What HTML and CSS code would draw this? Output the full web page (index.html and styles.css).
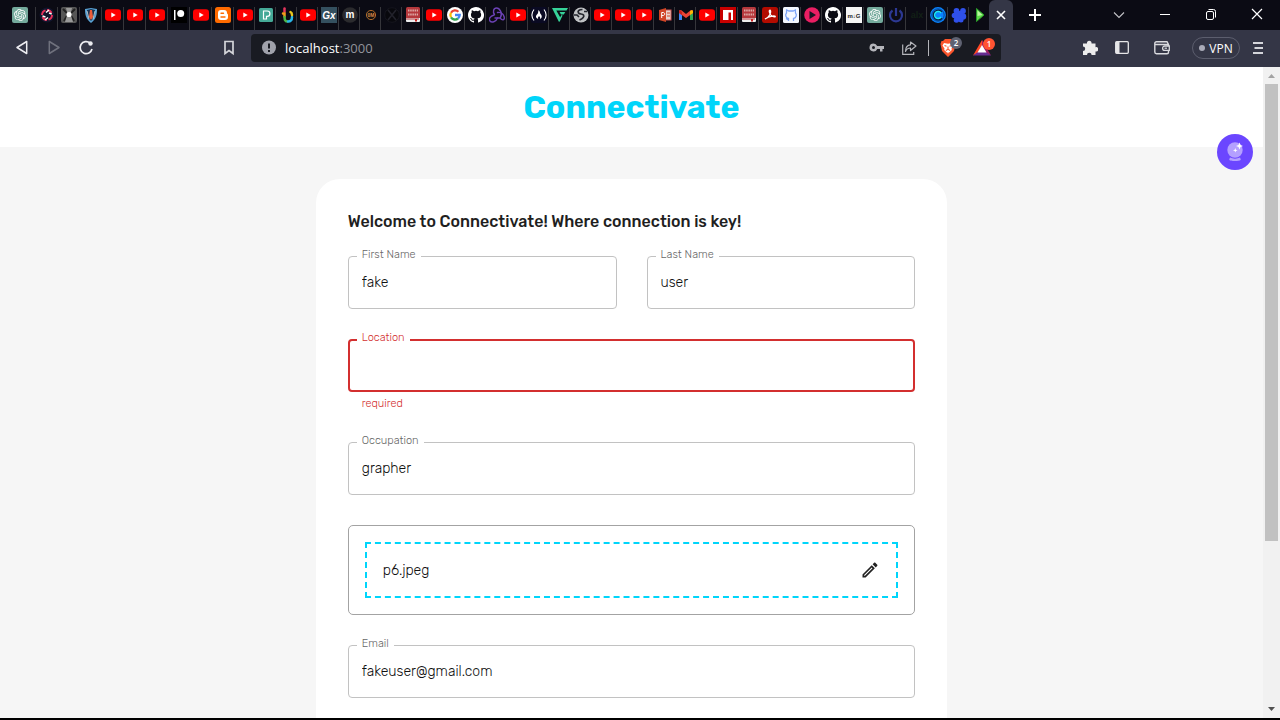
FILE: index.html
```html
<!DOCTYPE html>
<html lang="en">
<head>
<meta charset="utf-8">
<title>Connectivate</title>
<link rel="stylesheet" href="styles.css">
</head>
<body>
<svg class="sprite" aria-hidden="true">
  <symbol id="gpt" viewBox="0 0 32 32"><rect width="32" height="32" rx="4" fill="#74aa9c"/><path transform="translate(4 4)" fill="#fff" d="M22.2819 9.8211a5.9847 5.9847 0 0 0-.5157-4.9108 6.0462 6.0462 0 0 0-6.5098-2.9A6.0651 6.0651 0 0 0 4.9807 4.1818a5.9847 5.9847 0 0 0-3.9977 2.9 6.0462 6.0462 0 0 0 .7427 7.0966 5.98 5.98 0 0 0 .511 4.9107 6.051 6.051 0 0 0 6.5146 2.9001A5.9847 5.9847 0 0 0 13.2599 24a6.0557 6.0557 0 0 0 5.7718-4.2058 5.9894 5.9894 0 0 0 3.9977-2.9001 6.0557 6.0557 0 0 0-.7475-7.0729zm-9.022 12.6081a4.4755 4.4755 0 0 1-2.8764-1.0408l.1419-.0804 4.7783-2.7582a.7948.7948 0 0 0 .3927-.6813v-6.7369l2.02 1.1686a.071.071 0 0 1 .038.052v5.5826a4.504 4.504 0 0 1-4.4945 4.4944zm-9.6607-4.1254a4.4708 4.4708 0 0 1-.5346-3.0137l.142.0852 4.783 2.7582a.7712.7712 0 0 0 .7806 0l5.8428-3.3685v2.3324a.0804.0804 0 0 1-.0332.0615L9.74 19.9502a4.4992 4.4992 0 0 1-6.1408-1.6464zM2.3408 7.8956a4.485 4.485 0 0 1 2.3655-1.9728V11.6a.7664.7664 0 0 0 .3879.6765l5.8144 3.3543-2.0201 1.1685a.0757.0757 0 0 1-.071 0l-4.8303-2.7865A4.504 4.504 0 0 1 2.3408 7.872zm16.5963 3.8558L13.1038 8.364 15.1192 7.2a.0757.0757 0 0 1 .071 0l4.8303 2.7913a4.4944 4.4944 0 0 1-.6765 8.1042v-5.6772a.79.79 0 0 0-.407-.667zm2.0107-3.0231l-.142-.0852-4.7735-2.7818a.7759.7759 0 0 0-.7854 0L9.409 9.2297V6.8974a.0662.0662 0 0 1 .0284-.0615l4.8303-2.7866a4.4992 4.4992 0 0 1 6.6802 4.66zM8.3065 12.863l-2.02-1.1638a.0804.0804 0 0 1-.038-.0567V6.0742a4.4992 4.4992 0 0 1 7.3757-3.4537l-.142.0805L8.704 5.459a.7948.7948 0 0 0-.3927.6813zm1.0976-2.3654l2.602-1.4998 2.6069 1.4998v2.9994l-2.5974 1.4997-2.6067-1.4997Z"/></symbol>
  <symbol id="ring" viewBox="0 0 16 16"><circle cx="8" cy="8" r="7.500" fill="#11152c"/><g fill="none" stroke-width="1.900"><path d="M3 8a5 5 0 0 1 3.500-4.700M8 13a5 5 0 0 1-4.500-3" stroke="#e8305a"/><path d="M8 3a5 5 0 0 1 4.500 3M13 8a5 5 0 0 1-3.500 4.700" stroke="#e8305a"/><path d="M7 5.500l3-2.500M6 13l3-2.500M3.500 9l3 1M10 6l2.700 1" stroke="#fff" stroke-width="1.400"/></g></symbol>
  <symbol id="beam" viewBox="0 0 16 16"><rect width="16" height="16" rx="2" fill="#565656"/><path d="M2 2l5 5-4 7M14 2L9 7l4 7" stroke="#222" stroke-width="2" fill="none"/><path d="M5 1h6L9.500 7 12 15H4l2.500-8z" fill="#999"/><circle cx="8" cy="7.500" r="2.600" fill="#fff"/></symbol>
  <symbol id="shield" viewBox="0 0 16 16"><path d="M2 2l6-1 6 1c0 6-1 10-6 14C3 12 2 8 2 2z" fill="#5aa2d4"/><path d="M4 3l4-1 4 1c0 5-1 8-4 11C5 11 4 8 4 3z" fill="#173453"/><path d="M7 3h2l1 7-2 3-2-3z" fill="#ee5b38"/><path d="M4 4l2 8M12 4l-2 8" stroke="#ddd" stroke-width=".8"/></symbol>
  <symbol id="yt" viewBox="0 0 16 16"><rect y="2.300" width="16" height="11.400" rx="3" fill="#f00"/><path d="M6.300 5.500v5L10.700 8z" fill="#fff"/></symbol>
  <symbol id="patreon" viewBox="0 0 16 16"><rect width="16" height="16" fill="#000"/><path d="M3 3h1.500v10H3z" fill="#fff"/><circle cx="9.700" cy="6.600" r="3.500" fill="#fff"/></symbol>
  <symbol id="blogger" viewBox="0 0 16 16"><rect width="16" height="16" rx="2.500" fill="#ff6a00"/><path d="M6 3h3c2 0 3 1 3 3 0 1 1 .8 1 2v2c0 2-1 3-3 3H6c-2 0-3-1-3-3V6c0-2 1-3 3-3z" fill="#fff"/><path d="M6 6.200h2.500M6 10h4" stroke="#ff6a00" stroke-width="1.400" stroke-linecap="round"/></symbol>
  <symbol id="pexels" viewBox="0 0 16 16"><rect x="1" y="1" width="14" height="14" rx="1.500" fill="#45a997"/><path d="M5.500 12V4h3.700a2.700 2.700 0 0 1 0 5.400H8.500V12z" fill="none" stroke="#fff" stroke-width="1.200"/></symbol>
  <symbol id="rainbow" viewBox="0 0 16 16"><g fill="none" stroke-width="2.500" stroke-linecap="round"><path d="M5.500 1.500v3" stroke="#e6355d"/><path d="M4 6.500h1.500v3" stroke="#f49a1a"/><path d="M5.500 10c0 3 1 4.500 3 4.500" stroke="#4db748"/><path d="M9 14.500c3 0 4-2 4-4.500" stroke="#29b6e8"/><path d="M13 8c0-1.500-.5-2.500-1.500-3" stroke="#e9c51d"/></g></symbol>
  <symbol id="xdark" viewBox="0 0 16 16"><circle cx="8" cy="8" r="7.300" fill="#08080d" stroke="#16161e"/><path d="M4 3l8 10M12 3L4 13" stroke="#22222b" stroke-width="1.600"/></symbol>
  <symbol id="bible" viewBox="0 0 16 16"><rect x="1" width="14" height="13" rx="1.500" fill="#b5383c"/><path d="M1 11h14v3a1 1 0 0 1-1 1H2a1 1 0 0 1-1-1z" fill="#eee"/><path d="M1 12h13" stroke="#b5383c" stroke-width="1"/><path d="M10 12h2v3l-1-1-1 1z" fill="#c22"/><path d="M3 3.500h10M3 7.500h10" stroke="#dda9a5" stroke-width="2" stroke-dasharray="1.500 .7"/></symbol>
  <symbol id="google" viewBox="0 0 16 16"><circle cx="8" cy="8" r="8" fill="#fff"/><g fill="none" stroke-width="2.300"><path d="M4 5.700A4.700 4.700 0 0 1 11.400 4.700" stroke="#ea4335"/><path d="M4 10.300a4.700 4.700 0 0 1 0-4.600" stroke="#fbbc05"/><path d="M4 10.300a4.700 4.700 0 0 0 7 1.200" stroke="#34a853"/><path d="M11 11.500A4.700 4.700 0 0 0 12.700 8H8" stroke="#4285f4"/></g></symbol>
  <symbol id="cat" viewBox="0 0 16 16"><path fill="currentColor" d="M8 0C3.580 0 0 3.580 0 8c0 3.540 2.290 6.530 5.470 7.590.4.070.55-.17.55-.38v-1.490c-2.010.37-2.530-.49-2.690-.94-.09-.23-.48-.94-.82-1.130-.28-.15-.68-.52-.01-.53.63-.01 1.080.58 1.230.82.72 1.210 1.870.87 2.330.66.07-.52.28-.87.510-1.070-1.780-.2-3.640-.89-3.640-3.950 0-.87.310-1.590.82-2.150-.08-.2-.36-1.020.08-2.120 0 0 .67-.21 2.200.82a7.600 7.600 0 0 1 4 0c1.530-1.040 2.200-.82 2.200-.82.44 1.100.16 1.920.08 2.120.51.56.82 1.270.82 2.150 0 3.070-1.870 3.750-3.650 3.950.29.25.54.73.54 1.480v2.200c0 .21.15.46.55.38A8 8 0 0 0 8 0z"/></symbol>
  <symbol id="catbox" viewBox="0 0 16 16"><rect width="16" height="16" rx="1.500" fill="#f4f7ff"/><path d="M5.500 14v-2.500c-3-.4-3.500-4-2-5.500L3.600 3l2.300 1h4.200l2.300-1 .1 3c1.500 1.500 1 5.100-2 5.500V14M3 11.500l2.500 1.500" fill="none" stroke="#7ba3f7" stroke-width="1.300"/></symbol>
  <symbol id="redux" viewBox="0 0 16 16"><g fill="none" stroke="#6c42b5" stroke-width="1.400" stroke-linecap="round"><path d="M11.500 10.500C14 6 10.500 1 7.500 1S3.500 5 5.500 7.500"/><path d="M5 8c-4 1-5.500 4-4 6s6 1 7.500-3"/><path d="M6 11h5c3 3.500 5 1.500 4-1.500S11 5 8.500 5.500"/></g></symbol>
  <symbol id="fcc" viewBox="0 0 16 16"><rect width="16" height="16" rx="2" fill="#0a0a23"/><path d="M3 2.500C.3 6 .3 10 3 13.500M13 2.500c2.700 3.500 2.700 7.500 0 11" fill="none" stroke="#fff" stroke-width="1.100"/><path d="M7.500 3c2 1.500 1 3 2.500 4.500 1.500 2 .5 4-1 4.500.5-2-.5-2.500-1-3-.5 1-1.500 1.500-.8 3C4.500 11 4.500 9 6 7.500 7.500 6 7 5 7.500 3z" fill="#fff"/></symbol>
  <symbol id="vee" viewBox="0 0 16 16"><path d="M0 1h16l-1.500 2.500H4.300l4 7L7 15zM7.500 5h5.800l-1.500 2.500H9zM10.600 8.500L7.500 15l-1-2 3-5z" fill="#36d399"/></symbol>
  <symbol id="globe" viewBox="0 0 16 16"><circle cx="8" cy="8" r="7.500" fill="#bfc1c4"/><path d="M9.500 2.500c-4 0-5 2-4 3.500s4 .5 5 2-.5 3.500-4 5M1 8h3l2 2M11 4.500h3" stroke="#22242c" stroke-width="1.700" fill="none"/></symbol>
  <symbol id="ppt" viewBox="0 0 16 16"><rect x="7" y="3" width="7" height="10" fill="#e8d4cc" stroke="#c55"/><path d="M2 3l7-2v14l-7-2z" fill="#d04526"/><path d="M4.700 11V5.500h1.500c2 0 2 3 0 3H4.700" fill="none" stroke="#fff" stroke-width="1"/><path d="M10 6h3M10 9h3" stroke="#d04526"/></symbol>
  <symbol id="gmail" viewBox="0 0 16 16"><path d="M1 4v9h3V6z" fill="#4285f4"/><path d="M12 6v7h3V4z" fill="#34a853"/><path d="M1 3.500L3 3l5 4 5-4 2 .5V6l-7 5-7-5z" fill="#ea4335"/><path d="M12 4l2-1 1 1v2l-3 2z" fill="#fbbc04"/><path d="M1 4v2l3 2V5L2 3z" fill="#c5221f"/></symbol>
  <symbol id="npm" viewBox="0 0 16 16"><rect width="16" height="16" fill="#c80000"/><path d="M3 3h10v10h-2V5.500H8.500V13H3z" fill="#fff"/></symbol>
  <symbol id="acrobat" viewBox="0 0 16 16"><rect width="16" height="16" rx="2.500" fill="#b30b00"/><path d="M3 12c4-1 7-7 5-9-2 0 0 7 5 7 2-2-6-1-10 2z" fill="none" stroke="#fff" stroke-width="1.200"/></symbol>
  <symbol id="play" viewBox="0 0 16 16"><circle cx="8" cy="8" r="7.800" fill="#e91e63"/><path d="M5.500 4v8L12 8z" fill="#171523"/></symbol>
  <symbol id="power" viewBox="0 0 16 16"><path d="M4.500 3.500a6 6 0 1 0 7 0M8 1v8" fill="none" stroke="#2c3893" stroke-width="2.200"/></symbol>
  <symbol id="cee" viewBox="0 0 16 16"><circle cx="8" cy="8" r="7.900" fill="#0a83ff"/><circle cx="8" cy="8" r="6.200" fill="none" stroke="#063875" stroke-width=".8"/><path d="M11.500 5.200a4.300 4.300 0 1 0 0 5.600" fill="none" stroke="#062347" stroke-width="2.600"/><path d="M11 6a3.500 3.500 0 1 0 0 4" fill="none" stroke="#1deaf4" stroke-width="1.500"/></symbol>
  <symbol id="clover" viewBox="0 0 16 16"><g fill="#2f50ea"><circle cx="5.500" cy="4" r="2.900"/><circle cx="12" cy="4" r="2.900"/><circle cx="3.500" cy="8.500" r="2.800"/><circle cx="12" cy="9.500" r="3.200"/><circle cx="5.500" cy="13" r="2.800"/><circle cx="10" cy="13" r="2.500"/><path d="M4 4h8v9H4z"/></g></symbol>
  <symbol id="go" viewBox="0 0 16 16"><path d="M4.500 1.500v13L12 8z" fill="#5edc48" stroke="#2a9a2a"/><path d="M5.500 3.500V9l5-1z" fill="#b9f7a0"/></symbol>
</svg>

<header class="browser">
  <nav class="tabs" aria-label="Tabs">
    <button class="tab pinned" aria-label="Tab"><svg><use href="#gpt"/></svg></button>
    <button class="tab wide" aria-label="Tab"><svg><use href="#ring"/></svg></button>
    <button class="tab wide" aria-label="Tab"><svg><use href="#beam"/></svg></button>
    <button class="tab wide" aria-label="Tab"><svg><use href="#shield"/></svg></button>
    <button class="tab wide" aria-label="Tab"><svg><use href="#yt"/></svg></button>
    <button class="tab wide" aria-label="Tab"><svg><use href="#yt"/></svg></button>
    <button class="tab wide" aria-label="Tab"><svg><use href="#yt"/></svg></button>
    <button class="tab wide" aria-label="Tab"><svg><use href="#patreon"/></svg></button>
    <button class="tab wide" aria-label="Tab"><svg><use href="#yt"/></svg></button>
    <button class="tab wide" aria-label="Tab"><svg><use href="#blogger"/></svg></button>
    <button class="tab" aria-label="Tab"><svg><use href="#yt"/></svg></button>
    <button class="tab" aria-label="Tab"><svg><use href="#pexels"/></svg></button>
    <button class="tab" aria-label="Tab"><svg><use href="#rainbow"/></svg></button>
    <button class="tab" aria-label="Tab"><svg><use href="#yt"/></svg></button>
    <button class="tab" aria-label="Tab"><svg viewBox="0 0 16 16"><rect width="16" height="16" fill="#34505f"/><text x="8" y="11.500" text-anchor="middle" class="glyph gx-text">Gx</text></svg></button>
    <button class="tab" aria-label="Tab"><svg viewBox="0 0 16 16"><circle cx="8" cy="8" r="7.800" fill="#2b2b2e"/><text x="8" y="11" text-anchor="middle" class="glyph m-text">m</text></svg></button>
    <button class="tab" aria-label="Tab"><svg viewBox="0 0 16 16"><circle cx="8" cy="8" r="4.600" fill="#17120f" stroke="#b06a2a"/><text x="8" y="10" text-anchor="middle" class="glyph om-text">0M</text></svg></button>
    <button class="tab" aria-label="Tab"><svg><use href="#xdark"/></svg></button>
    <button class="tab" aria-label="Tab"><svg><use href="#bible"/></svg></button>
    <button class="tab" aria-label="Tab"><svg><use href="#yt"/></svg></button>
    <button class="tab" aria-label="Tab"><svg><use href="#google"/></svg></button>
    <button class="tab" aria-label="Tab"><svg><use href="#cat"/></svg></button>
    <button class="tab" aria-label="Tab"><svg><use href="#redux"/></svg></button>
    <button class="tab" aria-label="Tab"><svg><use href="#yt"/></svg></button>
    <button class="tab" aria-label="Tab"><svg><use href="#fcc"/></svg></button>
    <button class="tab" aria-label="Tab"><svg><use href="#vee"/></svg></button>
    <button class="tab" aria-label="Tab"><svg><use href="#globe"/></svg></button>
    <button class="tab" aria-label="Tab"><svg><use href="#yt"/></svg></button>
    <button class="tab" aria-label="Tab"><svg><use href="#yt"/></svg></button>
    <button class="tab" aria-label="Tab"><svg><use href="#yt"/></svg></button>
    <button class="tab" aria-label="Tab"><svg><use href="#ppt"/></svg></button>
    <button class="tab" aria-label="Tab"><svg><use href="#gmail"/></svg></button>
    <button class="tab" aria-label="Tab"><svg><use href="#yt"/></svg></button>
    <button class="tab" aria-label="Tab"><svg><use href="#npm"/></svg></button>
    <button class="tab" aria-label="Tab"><svg><use href="#bible"/></svg></button>
    <button class="tab" aria-label="Tab"><svg><use href="#acrobat"/></svg></button>
    <button class="tab" aria-label="Tab"><svg><use href="#catbox"/></svg></button>
    <button class="tab" aria-label="Tab"><svg><use href="#play"/></svg></button>
    <button class="tab" aria-label="Tab"><svg><use href="#cat"/></svg></button>
    <button class="tab" aria-label="Tab"><svg viewBox="0 0 16 16"><rect width="16" height="16" fill="#f5f5f5"/><text x="8" y="10.500" text-anchor="middle" class="glyph mg-text">m&#8595;G</text></svg></button>
    <button class="tab" aria-label="Tab"><svg><use href="#gpt"/></svg></button>
    <button class="tab" aria-label="Tab"><svg><use href="#power"/></svg></button>
    <button class="tab" aria-label="Tab"><svg viewBox="0 0 16 16"><text x="8" y="10.500" text-anchor="middle" class="glyph alx-text">alx</text></svg></button>
    <button class="tab" aria-label="Tab"><svg><use href="#cee"/></svg></button>
    <button class="tab" aria-label="Tab"><svg><use href="#clover"/></svg></button>
    <button class="tab" aria-label="Tab"><svg><use href="#go"/></svg></button>
    <button class="tab current" aria-label="Close tab"><svg viewBox="0 0 16 16"><path d="M4 4l8 8M12 4l-8 8" stroke="#fff" stroke-width="1.600"/></svg></button>
    <button class="new-tab" aria-label="New tab"><svg viewBox="0 0 16 16"><path d="M8 2v12M2 8h12" stroke="#fff" stroke-width="2"/></svg></button>
    <div class="window-buttons">
      <button class="win" aria-label="Search tabs"><svg viewBox="0 0 16 16"><path d="M3 5.500l5 5 5-5" fill="none" stroke="#c4c4c8" stroke-width="1.100"/></svg></button>
      <button class="win" aria-label="Minimize"><svg viewBox="0 0 16 16"><path d="M3 7.500h10" stroke="#fff"/></svg></button>
      <button class="win" aria-label="Restore"><svg viewBox="0 0 16 16"><rect x="3.500" y="4.500" width="7" height="8" rx="1.500" fill="none" stroke="#fff"/><path d="M5.500 2.500h5a2 2 0 0 1 2 2v6" fill="none" stroke="#fff"/></svg></button>
      <button class="win" aria-label="Close"><svg viewBox="0 0 16 16"><path d="M3 2l10 10M13 2L3 12" stroke="#fff" stroke-width="1.200"/></svg></button>
    </div>
  </nav>

  <div class="toolbar">
    <button class="tool" aria-label="Back"><svg viewBox="0 0 16 16"><path d="M12.700 1.500v12L3 7.500z" fill="none" stroke="#ececf0" stroke-width="1.500" stroke-linejoin="round"/></svg></button>
    <button class="tool" aria-label="Forward"><svg viewBox="0 0 16 16"><path d="M3.300 1.500v12L13 7.500z" fill="none" stroke="#6f717d" stroke-width="1.500" stroke-linejoin="round"/></svg></button>
    <button class="tool" aria-label="Reload"><svg viewBox="0 0 16 16"><path d="M12 3A6 6 0 1 0 14 9" fill="none" stroke="#ececf0" stroke-width="1.700"/><circle cx="12.500" cy="3.500" r="2.200" fill="#ececf0"/></svg></button>
    <button class="tool bookmark" aria-label="Bookmark"><svg viewBox="0 0 16 16"><path d="M4 1.500h8v12l-4-3-4 3z" fill="none" stroke="#d4d5da" stroke-width="1.700"/></svg></button>
    <div class="address">
      <svg class="info" viewBox="0 0 16 16"><circle cx="8" cy="7.500" r="7" fill="#a0a2ab"/><path d="M8 3.500v5M8 10v2" stroke="#191b22" stroke-width="2"/></svg>
      <span class="url">localhost<span class="port">:3000</span></span>
      <button class="tool" aria-label="Passwords"><svg viewBox="0 0 16 16"><path d="M4.500 3.500a4 4 0 1 0 3.700 5.500H11v2.500h2.500V9H15V6H8.200a4 4 0 0 0-3.700-2.500zm0 2.500a1.500 1.500 0 1 1 0 3 1.500 1.500 0 0 1 0-3z" fill="#b4b5ba" fill-rule="evenodd"/></svg></button>
      <button class="tool share" aria-label="Share"><svg viewBox="0 0 16 16"><path d="M1.700 4.500v9.800h11V12" fill="none" stroke="#b4b5ba" stroke-width="1.200"/><path d="M9.500 2L15 6l-5.500 4.500V8C7 8 5.500 9 4.500 11.500c0-4.500 2-6.500 5-6.700z" fill="none" stroke="#b4b5ba" stroke-width="1.200" stroke-linejoin="round"/></svg></button>
      <span class="divider"></span>
      <button class="tool brave" aria-label="Shields"><svg viewBox="0 0 16 18"><path d="M5 0h6l2 2 1.500 0 1 3-1.500 7-6 6-6-6L.5 5l1-3L3 2z" fill="#fb542b"/><path d="M4 4l4 .8L12 4l1.500 2.500-2 3 .3 1.500L8 14.500 4.200 11l.3-1.500-2-3z" fill="#fff"/><path d="M4.500 6.500l2 .8M11.500 6.500l-2 .8M8 7.500v2.700M5.800 11.500L8 10.300l2.200 1.200M8 13v.5" stroke="#fb542b" stroke-width="1.100" fill="none"/></svg><span class="badge gray">2</span></button>
      <button class="tool rewards" aria-label="Rewards"><svg viewBox="0 0 18 16"><path d="M9 0l4.500 8L9 5.500 5 13 0 15.500z" fill="#ff4724"/><path d="M9 0L18 15.500l-5-2.500L9 5.500z" fill="#9e1f63"/><path d="M0 15.500L5 12h8l5 3.500z" fill="#662d91"/><path d="M9 5L13.500 12.500h-9z" fill="#fff"/></svg><span class="badge orange">1</span></button>
    </div>
    <div class="extras">
      <button class="tool" aria-label="Extensions"><svg viewBox="0 0 16 16"><path d="M1 3.500h4a2.300 2.300 0 1 1 4.500 0h4v3.700a2.200 2.200 0 1 1 0 4.300v3.500H9.600a2.300 2.300 0 0 0-4.600 0H1v-4a2.200 2.200 0 0 0 0-4.400z" fill="#ececec"/></svg></button>
      <button class="tool side" aria-label="Sidebar"><svg viewBox="0 0 16 16"><rect x="1.700" y="1.700" width="12.600" height="11.600" rx="1" fill="none" stroke="#e6e6e8" stroke-width="1.300"/><path d="M2 2h3.500v11H2z" fill="#e6e6e8"/></svg></button>
      <button class="tool" aria-label="Wallet"><svg viewBox="0 0 16 16"><path d="M14.500 5.500v-1L13 1.700H2.500A1.700 1.700 0 0 0 .8 3.500V12a1.700 1.700 0 0 0 1.700 1.700H13a1.500 1.500 0 0 0 1.500-1.500V10.500M1 4.500h12a1.500 1.500 0 0 1 1.500 1.500" fill="none" stroke="#d9dade" stroke-width="1.400"/><path d="M15.300 6h-4.500a2.200 2.200 0 0 0 0 4.400h4.500z" fill="#343646" stroke="#d9dade" stroke-width="1.300"/><path d="M10.500 8.200h2.500" stroke="#d9dade" stroke-width="1.200"/></svg></button>
      <button class="vpn"><span class="dot"></span>VPN</button>
      <button class="tool" aria-label="Menu"><svg viewBox="0 0 16 16"><path d="M3 3h10M4.500 8H13M3 13h10" stroke="#d4d5da" stroke-width="2"/></svg></button>
    </div>
  </div>
</header>

<div class="viewport">
  <div class="page">
    <div class="brand-bar"><h1 class="brand">Connectivate</h1></div>
    <main class="card">
      <h2 class="welcome">Welcome to Connectivate! Where connection is key!</h2>
      <form class="form">
        <div class="field"><label for="first">First Name</label><input id="first" type="text" value="fake"></div>
        <div class="field"><label for="last">Last Name</label><input id="last" type="text" value="user"></div>
        <div class="field full error"><label for="location">Location</label><input id="location" type="text" aria-describedby="location-help"><p id="location-help" class="helper">required</p></div>
        <div class="field full"><label for="job">Occupation</label><input id="job" type="text" value="grapher"></div>
        <div class="upload full">
          <button type="button" class="drop"><span>p6.jpeg</span><svg class="pencil" viewBox="0 0 24 24"><path d="M14.060 9.020l.92.92L5.920 19H5v-.92l9.060-9.060M17.660 3c-.25 0-.51.1-.7.290l-1.830 1.830 3.750 3.750 1.830-1.830c.39-.39.39-1.020 0-1.410l-2.340-2.340c-.2-.2-.45-.29-.71-.29zm-3.600 3.190L3 17.250V21h3.750L17.810 9.940l-3.750-3.750z" fill="#222"/></svg></button>
        </div>
        <div class="field full"><label for="email">Email</label><input id="email" type="email" value="fakeuser@gmail.com"></div>
      </form>
    </main>
    <button class="assistant" aria-label="Assistant"><svg viewBox="0 0 36 36"><circle cx="18" cy="16" r="7.700" fill="#b4a0ff"/><path d="M13 23.500c3 1.500 7 1.500 10 0l.8 2c0 2-11.600 2-11.600 0z" fill="#b4a0ff"/><path d="M22.500 8.500l1 2.500 2.500 1-2.500 1-1 2.500-1-2.500-2.500-1 2.500-1zM18.300 14l.6 1.700 1.700.6-1.700.6-.6 1.700-.6-1.700-1.700-.6 1.700-.6z" fill="#fff"/></svg></button>
  </div>
  <div class="scrollbar" aria-hidden="true">
    <svg class="arrow" viewBox="0 0 17 17"><path d="M5 11l3.500-4 3.500 4z" fill="#a3a3a3"/></svg>
    <div class="track"><div class="thumb"></div></div>
    <svg class="arrow" viewBox="0 0 17 17"><path d="M5 6l3.500 4L12 6z" fill="#505050"/></svg>
  </div>
</div>
</body>
</html>
```

FILE: styles.css
```css
* { box-sizing: border-box; }

body {
  margin: 0;
  height: 100vh;
  display: flex;
  flex-direction: column;
  overflow: hidden;
  border-bottom: 2px solid #000;
  font-family: Rubik, Roboto, sans-serif;
  color: #1f1f1f;
}

button {
  margin: 0;
  padding: 0;
  border: 0;
  background: none;
  color: inherit;
  font: inherit;
}

.sprite { display: none; }

/* Browser frame */
.browser {
  flex: none;
  background: #0b0b14;
  color: #fff;
  font-family: "Open Sans", sans-serif;
}

.tabs { display: flex; height: 30px; }

.tab {
  flex: none;
  width: 21px;
  margin-top: 7px;
  padding-left: 3px;
  border-left: 1px solid #36363b;
  display: flex;
  align-items: flex-start;
}
.tab svg { flex: none; width: 16px; height: 16px; }
.tab.wide { width: 22px; }
.tab.pinned { width: 35px; padding-left: 12px; border-left: 0; }
.tab.current {
  width: 24px;
  margin-top: 0;
  padding: 7px 4px 0;
  border: 0;
  border-radius: 6px 6px 0 0;
  background: #343646;
}

.glyph { font-family: "Liberation Sans", sans-serif; font-weight: bold; fill: #fff; }
.gx-text { font-size: 10px; font-style: italic; }
.m-text { font-size: 10px; }
.om-text { font-size: 5px; fill: #d8894a; }
.mg-text { font-size: 6px; fill: #222; }
.alx-text { font-size: 9px; fill: #122016; }

.new-tab { margin-left: 14px; display: flex; align-items: center; }
.new-tab svg { width: 16px; height: 16px; }

.window-buttons { margin-left: auto; display: flex; }
.win { width: 46px; display: flex; align-items: center; justify-content: center; }
.win svg { width: 16px; height: 16px; }

.toolbar {
  display: flex;
  align-items: center;
  gap: 16px;
  height: 37px;
  padding: 0 14px 1px;
  background: #343646;
}
.tool { flex: none; position: relative; width: 16px; height: 16px; display: block; }
.tool svg { display: block; width: 16px; height: 16px; }
.bookmark { margin-left: 111px; }

.address {
  width: 750px;
  height: 28px;
  margin-left: -2px;
  padding: 0 10px;
  display: flex;
  align-items: center;
  border-radius: 4px;
  background: #191b22;
}
.info { width: 16px; height: 16px; }
.url { margin: 0 auto 0 8px; font-size: 13px; line-height: 20px; }
.port { color: #92949b; }
.share { margin-left: 16px; }
.divider { width: 1px; height: 16px; margin-left: 11px; background: #b4b5ba; }
.brave { height: 18px; margin-left: 11px; }
.brave svg { height: 18px; }
.rewards { width: 18px; margin-left: 17px; }
.rewards svg { width: 18px; }
.badge {
  position: absolute;
  top: -2px;
  left: 10px;
  width: 12px;
  height: 12px;
  border-radius: 6px;
  font-size: 8px;
  line-height: 12px;
  font-weight: 600;
  text-align: center;
}
.gray { background: #5f6272; }
.orange { background: #ff5332; }

.extras { margin-left: auto; display: flex; align-items: center; gap: 16px; }
.side { margin-right: 8px; }
.vpn {
  width: 48px;
  height: 22px;
  margin-left: 6px;
  margin-right: -6px;
  display: flex;
  align-items: center;
  justify-content: center;
  gap: 4px;
  border: 1px solid #5c5e6e;
  border-radius: 11px;
  font-size: 12px;
}
.dot { width: 6px; height: 6px; border-radius: 3px; background: #a9abb8; }

/* Web page */
.viewport { flex: 1; min-height: 0; display: flex; }
.page { flex: 1; position: relative; overflow: hidden; background: #f6f6f6; }

.brand-bar {
  height: 80px;
  display: flex;
  align-items: center;
  justify-content: center;
  background: #fff;
}
.brand { margin: 0; font-size: 32px; line-height: 40px; font-weight: 700; color: #00d5fa; }

.card {
  width: 50%;
  margin: 32px auto;
  padding: 32px 32px 64px;
  border-radius: 24px;
  background: #fff;
}
.welcome { margin: 0 0 24px; font-size: 16px; line-height: 21px; font-weight: 500; }

.form { display: grid; grid-template-columns: 1fr 1fr; gap: 30px; }
.full { grid-column: 1 / -1; }

.field { position: relative; }
.field label {
  position: absolute;
  top: -8px;
  left: 9px;
  padding: 0 5px;
  background: #fff;
  font-size: 11px;
  font-weight: 300;
  line-height: 14px;
  color: #666;
}
.field input {
  display: block;
  width: 100%;
  height: 53px;
  padding: 0 13px;
  border: 1px solid #c2c2c2;
  border-radius: 4px;
  outline: 0;
  background: #fff;
  font: inherit;
  font-size: 14px;
  font-weight: 300;
  color: #111;
}
.error input { border: 2px solid #d32f2f; }
.error label, .helper { color: #d32f2f; }
.helper { margin: 3px 14px 0; font-size: 11px; font-weight: 300; line-height: 17px; }

.upload { padding: 16px; border: 1px solid #a3a3a3; border-radius: 5px; }
.drop {
  width: 100%;
  height: 56px;
  padding: 0 16px;
  display: flex;
  align-items: center;
  justify-content: space-between;
  border: 2px dashed #00d5fa;
  font-size: 14px;
  font-weight: 300;
  color: #111;
}
.pencil { width: 20px; height: 20px; }

.assistant {
  position: absolute;
  top: 67px;
  right: 10px;
  width: 36px;
  height: 36px;
  border-radius: 18px;
  background: #6b46ff;
}
.assistant svg { display: block; width: 36px; height: 36px; }

.scrollbar { width: 17px; display: flex; flex-direction: column; background: #f1f1f1; }
.arrow { flex: none; width: 17px; height: 17px; }
.track { flex: 1; padding: 0 2px; }
.thumb { height: 74%; background: #c1c1c1; }
```
